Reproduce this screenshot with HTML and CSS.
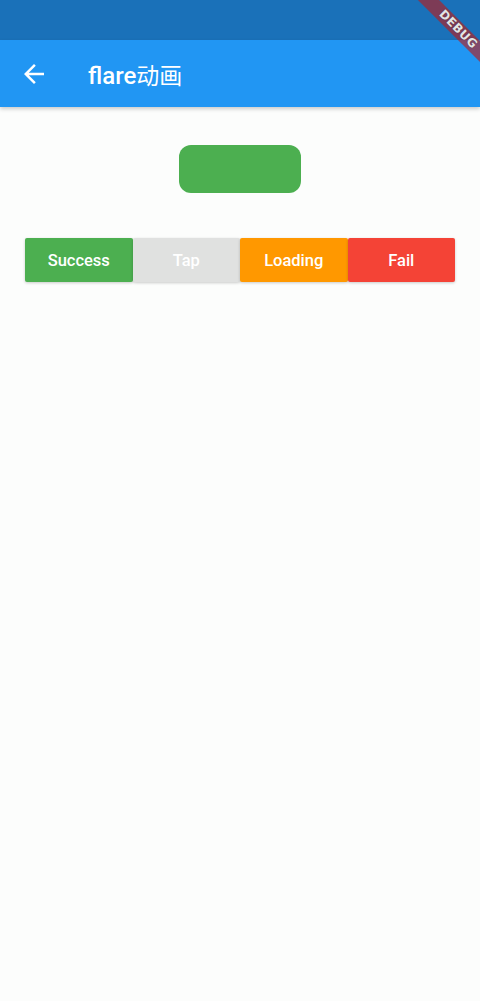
FILE: index.html
```html
<!DOCTYPE html>
<html lang="zh">
<head>
<meta charset="utf-8">
<link rel="stylesheet" href="styles.css">
</head>
<body>
<div class="page">
  <div class="status"></div>
  <header class="appbar">
    <div class="back">
      <svg width="30" height="30" viewBox="0 0 24 24"><path d="M20 11H7.83l5.59-5.59L12 4l-8 8 8 8 1.41-1.41L7.83 13H20v-2z" fill="#fff"/></svg>
    </div>
    <div class="title"><span class="latin">flare</span><span class="cjk">动画</span></div>
  </header>
  <main class="content">
    <div class="anim"></div>
    <div class="buttons">
      <div class="btn success">Success</div>
      <div class="btn tap">Tap</div>
      <div class="btn loading">Loading</div>
      <div class="btn fail">Fail</div>
    </div>
  </main>
  <div class="banner"><span>DEBUG</span></div>
</div>
</body>
</html>
```
FILE: styles.css
```css
* { box-sizing: border-box; }
html, body { margin: 0; padding: 0; }
body {
  width: 480px;
  height: 1001px;
  overflow: hidden;
  background: #fcfdfc;
  font-family: Roboto, "Noto Sans CJK SC", sans-serif;
}
.page { position: relative; width: 480px; height: 1001px; }
.status { height: 40px; background: #1a71b9; }
.appbar {
  height: 67px;
  background: #2196f3;
  display: flex;
  align-items: center;
  box-shadow: 0 2px 4px rgba(0,0,0,0.2);
  position: relative;
  z-index: 1;
}
.back { width: 30px; height: 30px; margin-left: 19px; margin-top: 1px; display: flex; }
.title {
  margin-left: 39px;
  color: #fff;
  display: flex;
  align-items: baseline;
}
.latin {
  font-family: Roboto, sans-serif;
  font-size: 24px;
  font-weight: 500;
}
.cjk {
  font-family: "Noto Sans CJK SC", sans-serif;
  font-size: 23px;
  font-weight: 400;
}
.content {
  display: flex;
  flex-direction: column;
  align-items: center;
  padding-top: 38px;
}
.anim {
  width: 122px;
  height: 48px;
  background: #4caf50;
  border-radius: 12px;
}
.buttons {
  margin-top: 45px;
  display: flex;
  width: 430px;
  height: 44px;
}
.btn {
  flex: 1;
  display: flex;
  align-items: center;
  justify-content: center;
  color: #fff;
  font-size: 16.5px;
  font-weight: 500;
  border-radius: 2px;
  box-shadow: 0 1px 3px rgba(0,0,0,0.2);
}
.success { background: #4caf50; }
.tap { background: #e0e1e0; }
.loading { background: #ff9800; }
.fail { background: #f44336; }
.banner {
  position: absolute;
  left: 408px;
  top: 22px;
  width: 100px;
  height: 15px;
  background: rgba(183,28,28,0.63);
  transform: rotate(45deg);
  display: flex;
  align-items: center;
  justify-content: center;
  z-index: 5;
}
.banner span {
  color: #e4e4e4;
  font-size: 12px;
  font-weight: 900;
  line-height: 15px;
  letter-spacing: 0.3px;
  font-family: "DejaVu Sans", sans-serif;
  text-shadow: 0 0 1px rgba(0,0,0,0.5);
}
```
